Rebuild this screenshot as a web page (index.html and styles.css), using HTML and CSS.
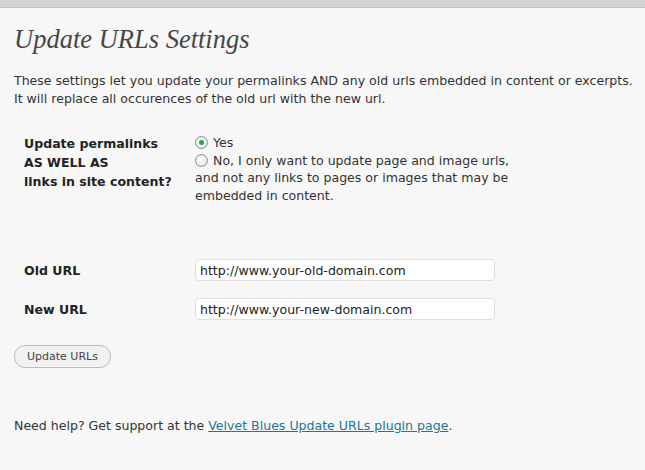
FILE: index.html
```html
<!DOCTYPE html>
<html>
<head>
<meta charset="utf-8">
<link rel="stylesheet" href="styles.css">
</head>
<body>
<div class="topbar"></div>
<div class="wrap">
  <h2 class="title">Update URLs Settings</h2>
  <p class="intro">These settings let you update your permalinks AND any old urls embedded in content or excerpts.<br>It will replace all occurences of the old url with the new url.</p>
  <div class="form">
    <div class="row row-choice">
      <div class="label">Update permalinks<br>AS WELL AS<br>links in site content?</div>
      <div class="field choices">
        <label class="choice"><span class="radio checked"></span>Yes</label>
        <label class="choice"><span class="radio"></span>No, I only want to update page and image urls,<br>and not any links to pages or images that may be<br>embedded in content.</label>
      </div>
    </div>
    <div class="row row-url">
      <div class="label">Old URL</div>
      <div class="field"><input class="text" type="text" value="http://www.your-old-domain.com"></div>
    </div>
    <div class="row row-url">
      <div class="label">New URL</div>
      <div class="field"><input class="text" type="text" value="http://www.your-new-domain.com"></div>
    </div>
  </div>
  <button class="button">Update URLs</button>
  <p class="help">Need help? Get support at the <a href="#">Velvet Blues Update URLs plugin page</a>.</p>
</div>
</body>
</html>
```
FILE: styles.css
```css
html, body {
  margin: 0;
  padding: 0;
  background: #f7f7f7;
}
body {
  font-family: "DejaVu Sans", Verdana, sans-serif;
  font-size: 12.55px;
  color: #333333;
}
.topbar {
  height: 7px;
  background: #d4d4d4;
  border-bottom: 1px solid #c2c2c2;
}
.wrap {
  padding-left: 14px;
}
.title {
  margin: 0;
  padding-top: 16px;
  font-family: "Liberation Serif", Georgia, serif;
  font-style: italic;
  font-weight: normal;
  font-size: 26.5px;
  line-height: 30px;
  color: #464646;
}
.intro {
  margin: 18px 0 0;
  line-height: 18px;
}
.form {
  margin-top: 26px;
  padding-left: 10px;
}
.row {
  display: grid;
  grid-template-columns: 171px 1fr;
  align-items: start;
}
.label {
  font-weight: bold;
  line-height: 19px;
  color: #222;
}
.choices {
  display: flex;
  flex-direction: column;
  line-height: 17.5px;
}
.choice {
  display: block;
  white-space: nowrap;
}
.radio {
  display: inline-block;
  width: 11px;
  height: 11px;
  border: 1px solid #7e8da5;
  border-radius: 50%;
  background: radial-gradient(circle at 40% 40%, #ffffff 0%, #e4e6ea 70%, #d0d4da 100%);
  margin: 0 5px 0 0;
  vertical-align: -2px;
  position: relative;
}
.radio.checked::after {
  content: "";
  position: absolute;
  left: 3px;
  top: 3px;
  width: 5px;
  height: 5px;
  border-radius: 50%;
  background: #2ea52e;
}
.row-url {
  align-items: center;
}
.row-choice {
  margin-bottom: 55px;
}
.row-url + .row-url {
  margin-top: 17px;
}
.text {
  box-sizing: border-box;
  width: 300px;
  height: 22px;
  border: 1px solid #dfdfdf;
  border-radius: 4px;
  background: #ffffff;
  font-family: "DejaVu Sans", Verdana, sans-serif;
  font-size: 12.55px;
  color: #222;
  padding: 0 4px;
  margin: 0;
}
.button {
  display: block;
  margin-top: 25px;
  height: 23px;
  padding: 0 12px;
  font-family: "DejaVu Sans", Verdana, sans-serif;
  font-size: 11px;
  color: #464646;
  background: #f2f2f2;
  border: 1px solid #bbbbbb;
  border-radius: 11px;
}
.help {
  margin: 49px 0 0;
  line-height: 18px;
}
.help a {
  color: #21759b;
  text-decoration: underline;
}
```
